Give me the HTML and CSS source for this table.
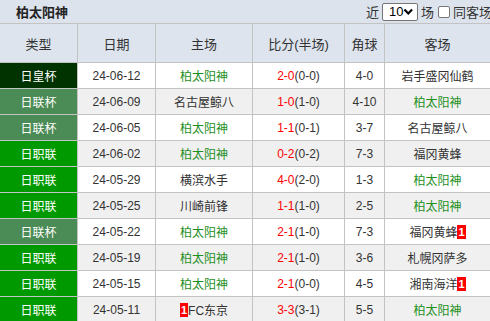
FILE: index.html
```html
<!DOCTYPE html>
<html lang="zh">
<head>
<meta charset="utf-8">
<link rel="stylesheet" href="styles.css">
</head>
<body>
<div class="page">
  <div class="titlebar">
    <div class="title">柏太阳神</div>
    <div class="controls">
      <span>近</span>
      <span class="select">10<svg width="11" height="8" viewBox="0 0 11 8"><path d="M1.5 1.5 L5.5 5.5 L9.5 1.5" fill="none" stroke="#000" stroke-width="2.2"/></svg></span>
      <span>场</span>
      <span class="check"></span>
      <span>同客场</span>
    </div>
  </div>
  <div class="row head">
    <div class="c">类型</div><div class="c">日期</div><div class="c">主场</div><div class="c">比分(半场)</div><div class="c">角球</div><div class="c">客场</div>
  </div>
  <div class="row">
    <div class="c t1">日皇杯</div><div class="c">24-06-12</div><div class="c g">柏太阳神</div><div class="c"><span class="r">2-0</span>(0-0)</div><div class="c">4-0</div><div class="c">岩手盛冈仙鹤</div>
  </div>
  <div class="row alt">
    <div class="c t2">日联杯</div><div class="c">24-06-09</div><div class="c">名古屋鲸八</div><div class="c"><span class="r">1-0</span>(1-0)</div><div class="c">4-10</div><div class="c g">柏太阳神</div>
  </div>
  <div class="row">
    <div class="c t2">日联杯</div><div class="c">24-06-05</div><div class="c g">柏太阳神</div><div class="c"><span class="r">1-1</span>(0-1)</div><div class="c">3-7</div><div class="c">名古屋鲸八</div>
  </div>
  <div class="row alt">
    <div class="c t3">日职联</div><div class="c">24-06-02</div><div class="c g">柏太阳神</div><div class="c"><span class="r">0-2</span>(0-2)</div><div class="c">7-3</div><div class="c">福冈黄蜂</div>
  </div>
  <div class="row">
    <div class="c t3">日职联</div><div class="c">24-05-29</div><div class="c">横滨水手</div><div class="c"><span class="r">4-0</span>(2-0)</div><div class="c">1-3</div><div class="c g">柏太阳神</div>
  </div>
  <div class="row alt">
    <div class="c t3">日职联</div><div class="c">24-05-25</div><div class="c">川崎前锋</div><div class="c"><span class="r">1-1</span>(1-0)</div><div class="c">2-5</div><div class="c g">柏太阳神</div>
  </div>
  <div class="row">
    <div class="c t2">日联杯</div><div class="c">24-05-22</div><div class="c g">柏太阳神</div><div class="c"><span class="r">2-1</span>(1-0)</div><div class="c">7-3</div><div class="c">福冈黄蜂<span class="badge">1</span></div>
  </div>
  <div class="row alt">
    <div class="c t3">日职联</div><div class="c">24-05-19</div><div class="c g">柏太阳神</div><div class="c"><span class="r">2-1</span>(1-0)</div><div class="c">3-6</div><div class="c">札幌冈萨多</div>
  </div>
  <div class="row">
    <div class="c t3">日职联</div><div class="c">24-05-15</div><div class="c g">柏太阳神</div><div class="c"><span class="r">2-1</span>(0-0)</div><div class="c">4-5</div><div class="c">湘南海洋<span class="badge">1</span></div>
  </div>
  <div class="row alt">
    <div class="c t3">日职联</div><div class="c">24-05-11</div><div class="c"><span class="badge">1</span>FC东京</div><div class="c"><span class="r">3-3</span>(3-1)</div><div class="c">5-5</div><div class="c g">柏太阳神</div>
  </div>
</div>
</body>
</html>
```

FILE: styles.css
```css
html, body {
  margin: 0;
  padding: 0;
  background: #fff;
}
.page {
  width: 490px;
  height: 321px;
  overflow: hidden;
  font-family: "Liberation Sans", "Noto Sans CJK SC", sans-serif;
  font-size: 12px;
  color: #333;
}
.titlebar {
  height: 23px;
  border-bottom: 1px solid #c3c3c3;
  background: #dce3ec;
  display: flex;
  align-items: center;
  white-space: nowrap;
  overflow: hidden;
}
.title {
  flex: 0 0 auto;
  width: 366px;
  box-sizing: border-box;
  padding-left: 16px;
  font-weight: bold;
  font-size: 13px;
  color: #222;
}
.controls {
  flex: 0 0 auto;
  display: flex;
  align-items: center;
  gap: 3px;
  font-size: 13px;
  color: #333;
}
.select {
  display: inline-flex;
  align-items: center;
  justify-content: space-between;
  box-sizing: border-box;
  width: 36px;
  height: 18px;
  padding: 0 3px 0 6px;
  border: 1px solid #767676;
  border-radius: 2px;
  background: #fff;
  color: #000;
  font-size: 13px;
}
.check {
  display: inline-block;
  width: 12px;
  height: 12px;
  box-sizing: border-box;
  border: 1px solid #767676;
  border-radius: 2px;
  background: #fff;
  margin-left: 1px;
}
.row {
  display: grid;
  grid-template-columns: 77px 78px 97px 92px 40px 106px;
  height: 26px;
  box-sizing: border-box;
  border-bottom: 1px solid #c3c3c3;
  background: #fff;
}
.row.alt {
  background: #f0f0f0;
}
.row.head {
  height: 39px;
  background: #dde4ed;
  font-size: 13px;
}
.c {
  display: flex;
  align-items: center;
  justify-content: center;
  white-space: nowrap;
  box-sizing: border-box;
}
.c + .c {
  border-left: 1px solid #c3c3c3;
}
.t1 { background: #003300; color: #fff; }
.t2 { background: #4b8b55; color: #fff; }
.t3 { background: #009900; color: #fff; }
.g { color: #1f8f1f; }
.r { color: #ff0000; }
.badge {
  display: inline-block;
  background: #ff0000;
  color: #fff;
  font-weight: bold;
  font-size: 11px;
  line-height: 14px;
  height: 14px;
  padding: 0 1px;
}
```
